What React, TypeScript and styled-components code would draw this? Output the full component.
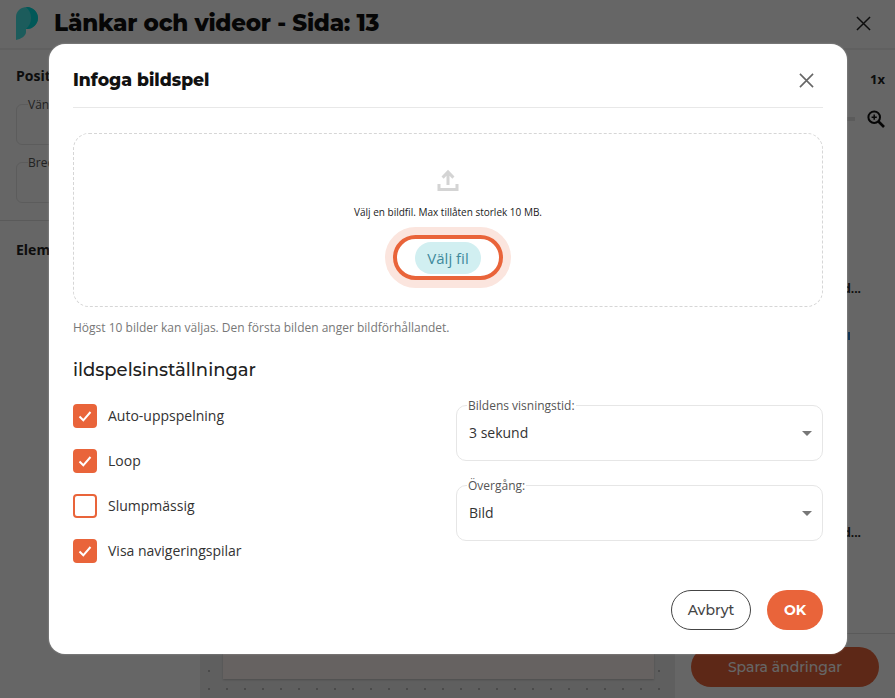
import React from "react";
import styled, { createGlobalStyle } from "styled-components";

const HEAD = `"Montserrat", "Inter", "Liberation Sans", sans-serif`;
const BODY = `"Open Sans", "Noto Sans", sans-serif`;

const Global = createGlobalStyle`
  html, body { margin: 0; padding: 0; height: 100%; background: #fff; }
  * { box-sizing: border-box; }
  #root { height: 100%; }
`;

const Screen = styled.div`
  position: relative;
  width: 895px;
  height: 698px;
  overflow: hidden;
  font-family: ${BODY};
  color: #222;
  display: flex;
  flex-direction: column;
  background: #fff;
`;

const PageHeader = styled.header`
  height: 50px;
  flex: none;
  display: flex;
  align-items: center;
  padding: 0 24px 1px 16px;
  border-bottom: 2px solid #f0f0f0;
  gap: 16px;
`;

const PageTitle = styled.h1`
  margin: 0;
  flex: 1;
  font: 800 23px/1 ${HEAD};
  letter-spacing: -0.25px;
  color: #111;
`;

const PageClose = styled.div`
  color: #222;
  display: flex;
`;

const PageBody = styled.div`
  flex: 1;
  display: flex;
  min-height: 0;
`;

const LeftPanel = styled.aside`
  width: 200px;
  flex: none;
  display: flex;
  flex-direction: column;
`;

const PanelHead = styled.div`
  font: 700 14px/20px ${BODY};
  color: #222;
`;

const PositionBlock = styled.div`
  padding: 16px 16px 0;
  height: 171px;
  border-bottom: 1px solid #e2e2e2;
`;

const GhostField = styled.div`
  margin-top: 18px;
  height: 41px;
  border: 1px solid #e6e6e6;
  border-radius: 6px;
  position: relative;
  & + & { margin-top: 17px; }
`;

const GhostLabel = styled.span`
  position: absolute;
  left: 11px;
  top: -8px;
  font-size: 12px;
  line-height: 16px;
  background: #fff;
  color: #555;
`;

const ElementBlock = styled.div`
  padding: 19px 16px 0;
`;

const Canvas = styled.main`
  width: 475px;
  flex: none;
  display: flex;
  flex-direction: column;
  justify-content: flex-end;
  background-color: #eee;
  background-image: radial-gradient(#b8b8b8 1px, transparent 1.2px);
  background-size: 18px 18px;
  padding: 0 21px 19px 23px;
`;

const Sheet = styled.div`
  height: 60px;
  background: #fff6f3;
  box-shadow: 0 1px 2px rgba(0, 0, 0, 0.2);
`;

const RightPanel = styled.aside`
  flex: 1;
  display: flex;
  flex-direction: column;
  align-items: flex-end;
  padding: 20px 10px 0 0;
`;

const Zoomed = styled.div`
  font: 700 13px/18px ${BODY};
  color: #222;
`;

const ZoomRow = styled.div`
  margin-top: 21px;
  align-self: stretch;
  display: flex;
  align-items: center;
  gap: 12px;
  height: 20px;
  color: #111;
  padding-left: 10px;
`;

const ZoomTrack = styled.div`
  flex: 1;
  height: 4px;
  background: #e4e4e4;
`;

const ClippedItem = styled.div<{ $gap: number }>`
  margin-top: ${(p) => p.$gap}px;
  margin-right: 24px;
  font: 700 12px/18px ${BODY};
  color: #222;
`;

const LinkSliver = styled.div`
  margin-top: 34px;
  margin-right: 35px;
  width: 2px;
  height: 8px;
  background: #2f7fd0;
`;

const SaveRow = styled.div`
  margin-top: auto;
  align-self: stretch;
  margin-right: -10px;
  height: 65px;
  border-top: 1px solid #e2e2e2;
  padding: 13px 16px 0 16px;
`;

const SaveButton = styled.div`
  height: 40px;
  border-radius: 20px;
  background: #e9643a;
  color: #fff;
  font: 500 14px/40px ${HEAD};
  text-align: center;
`;

const Overlay = styled.div`
  position: absolute;
  inset: 0;
  background: rgba(0, 0, 0, 0.6);
`;

const Modal = styled.section`
  position: absolute;
  left: 49px;
  top: 44px;
  width: 798px;
  height: 610px;
  border-radius: 16px;
  background: #fff;
  box-shadow: 0 0 2px rgba(255, 255, 255, 0.4);
  padding: 0 24px;
  display: flex;
  flex-direction: column;
`;

const ModalHeader = styled.header`
  height: 64px;
  flex: none;
  display: flex;
  align-items: center;
  justify-content: space-between;
  padding-top: 9px;
  border-bottom: 1px solid #e8e8e8;
`;

const ModalTitle = styled.h2`
  margin: 0;
  font: 800 17.2px/1 ${HEAD};
  color: #111;
`;

const ModalClose = styled.div`
  color: #666;
  display: flex;
  margin-right: 9px;
`;

const DropZone = styled.div`
  margin-top: 25px;
  height: 174px;
  flex: none;
  border: 1px dashed #d6d6d6;
  border-radius: 16px;
  display: flex;
  flex-direction: column;
  align-items: center;
  padding-top: 35px;
`;

const DropText = styled.p`
  margin: 14px 0 0;
  font: 400 10px/14px ${BODY};
  color: #222;
`;

const FocusRing = styled.div`
  margin-top: 8px;
  width: 126px;
  height: 61px;
  border-radius: 31px;
  background: #fbe5de;
  display: flex;
  align-items: center;
  justify-content: center;
`;

const FocusInner = styled.div`
  width: 110px;
  height: 45px;
  border-radius: 23px;
  border: 4px solid #e9643a;
  background: #fff;
  display: flex;
  align-items: center;
  justify-content: center;
`;

const PickButton = styled.div`
  width: 66px;
  height: 32px;
  border-radius: 16px;
  background: #d1eff1;
  color: #3f8a9c;
  font: 400 15px/32px ${BODY};
  text-align: center;
`;

const Hint = styled.p`
  margin: 13px 0 0;
  font: 400 12px/16px ${BODY};
  color: #777;
`;

const SectionTitle = styled.h3`
  margin: 22px 0 0;
  font: 500 18px/24px ${HEAD};
  color: #222;
`;

const SettingsGrid = styled.div`
  margin-top: 22px;
  display: flex;
`;

const CheckColumn = styled.div`
  width: 383px;
  flex: none;
  display: flex;
  flex-direction: column;
  gap: 21px;
`;

const CheckRow = styled.label`
  display: flex;
  align-items: center;
  height: 24px;
  gap: 11px;
  font: 400 14px/24px ${BODY};
  color: #333;
`;

const CheckBox = styled.span<{ $checked: boolean }>`
  width: 24px;
  height: 24px;
  border-radius: 4px;
  border: 2.5px solid #e9643a;
  background: ${(p) => (p.$checked ? "#e9643a" : "#fff")};
  display: flex;
  align-items: center;
  justify-content: center;
  color: #fff;
`;

const SelectColumn = styled.div`
  flex: 1;
  margin-top: 1px;
  display: flex;
  flex-direction: column;
  gap: 24px;
`;

const SelectBox = styled.fieldset`
  margin: 0;
  height: 56px;
  padding: 0 10px 0 12px;
  border: 1px solid #e6e6e6;
  border-radius: 10px;
  display: flex;
  align-items: flex-start;
  justify-content: space-between;
  min-width: 0;
  position: relative;
`;

const SelectLegend = styled.legend`
  position: absolute;
  left: 10px;
  top: -8px;
  padding: 0 1px;
  background: #fff;
  font: 400 12px/15px ${BODY};
  color: #555;
`;

const SelectValue = styled.span`
  margin-top: 17px;
  font: 400 14px/20px ${BODY};
  color: #333;
`;

const Caret = styled.span`
  margin-top: 25px;
  width: 0;
  height: 0;
  border-left: 5px solid transparent;
  border-right: 5px solid transparent;
  border-top: 5px solid #777;
`;

const Actions = styled.footer`
  margin-top: 27px;
  display: flex;
  justify-content: flex-end;
  gap: 16px;
`;

const CancelButton = styled.div`
  width: 80px;
  height: 40px;
  border: 1px solid #444;
  border-radius: 20px;
  font: 500 14px/38px ${HEAD};
  text-align: center;
  color: #444;
`;

const OkButton = styled.div`
  width: 56px;
  height: 40px;
  border-radius: 20px;
  background: #e9643a;
  font: 700 14px/40px ${HEAD};
  text-align: center;
  color: #fff;
`;

const Logo = () => (
  <svg width="22" height="33" viewBox="0 0 22 33">
    <path d="M0 10C0 4 5 0 11 0c6 0 11 5 11 11s-5 11-11 11c0 0-1 0-1 0v3c0 4-5 7-10 8z" fill="#48e6e6" />
    <path d="M10 0h1c6 0 11 5 11 11s-5 11-11 11h-1c3-3 5-6 5-11S13 3 10 0z" fill="#00dcdc" />
  </svg>
);

const X = ({ size, sw }: { size: number; sw: number }) => (
  <svg width={size} height={size} viewBox="0 0 16 16" fill="none" stroke="currentColor" strokeWidth={sw}>
    <path d="M1 1l14 14M15 1L1 15" />
  </svg>
);

const ZoomIcon = () => (
  <svg width="18" height="18" viewBox="0 0 18 18" fill="none" stroke="currentColor" strokeWidth="2" style={{ flex: "none" }}>
    <circle cx="7.2" cy="7.2" r="5.8" />
    <path d="M11.5 11.5L17 17" strokeWidth="2.6" />
    <path d="M7.2 4.6v5.2M4.6 7.2h5.2" strokeWidth="1.5" />
  </svg>
);

const UploadIcon = () => (
  <svg width="22" height="22" viewBox="0 0 22 22" fill="none" stroke="#d4d4d4" strokeWidth="3">
    <path d="M11 16V3.5M5.6 8.6L11 3l5.4 5.6" />
    <path d="M2 15v5.4h18V15" />
  </svg>
);

const Check = () => (
  <svg width="14" height="12" viewBox="0 0 14 12" fill="none" stroke="#fff" strokeWidth="2">
    <path d="M1.5 6.5l3.8 3.8L12.5 2" />
  </svg>
);

const checks = [
  { label: "Auto-uppspelning", on: true },
  { label: "Loop", on: true },
  { label: "Slumpmässig", on: false },
  { label: "Visa navigeringspilar", on: true },
];

const selects = [
  { label: "Bildens visningstid:", value: "3 sekund" },
  { label: "Övergång:", value: "Bild" },
];

export default function App() {
  return (
    <Screen>
      <Global />
      <PageHeader>
        <Logo />
        <PageTitle>Länkar och videor - Sida: 13</PageTitle>
        <PageClose>
          <X size={15} sw={1.6} />
        </PageClose>
      </PageHeader>
      <PageBody>
        <LeftPanel>
          <PositionBlock>
            <PanelHead>Position</PanelHead>
            <GhostField>
              <GhostLabel>Vänster</GhostLabel>
            </GhostField>
            <GhostField>
              <GhostLabel>Bredd</GhostLabel>
            </GhostField>
          </PositionBlock>
          <ElementBlock>
            <PanelHead>Element</PanelHead>
          </ElementBlock>
        </LeftPanel>
        <Canvas>
          <Sheet />
        </Canvas>
        <RightPanel>
          <Zoomed>1x</Zoomed>
          <ZoomRow>
            <ZoomTrack />
            <ZoomIcon />
          </ZoomRow>
          <ClippedItem $gap={151}>d...</ClippedItem>
          <LinkSliver />
          <ClippedItem $gap={184}>d...</ClippedItem>
          <SaveRow>
            <SaveButton>Spara ändringar</SaveButton>
          </SaveRow>
        </RightPanel>
      </PageBody>
      <Overlay />
      <Modal>
        <ModalHeader>
          <ModalTitle>Infoga bildspel</ModalTitle>
          <ModalClose>
            <X size={15} sw={1.7} />
          </ModalClose>
        </ModalHeader>
        <DropZone>
          <UploadIcon />
          <DropText>Välj en bildfil. Max tillåten storlek 10 MB.</DropText>
          <FocusRing>
            <FocusInner>
              <PickButton>Välj fil</PickButton>
            </FocusInner>
          </FocusRing>
        </DropZone>
        <Hint>Högst 10 bilder kan väljas. Den första bilden anger bildförhållandet.</Hint>
        <SectionTitle>ildspelsinställningar</SectionTitle>
        <SettingsGrid>
          <CheckColumn>
            {checks.map((c) => (
              <CheckRow key={c.label}>
                <CheckBox $checked={c.on}>{c.on && <Check />}</CheckBox>
                {c.label}
              </CheckRow>
            ))}
          </CheckColumn>
          <SelectColumn>
            {selects.map((s) => (
              <SelectBox key={s.label}>
                <SelectLegend>{s.label}</SelectLegend>
                <SelectValue>{s.value}</SelectValue>
                <Caret />
              </SelectBox>
            ))}
          </SelectColumn>
        </SettingsGrid>
        <Actions>
          <CancelButton>Avbryt</CancelButton>
          <OkButton>OK</OkButton>
        </Actions>
      </Modal>
    </Screen>
  );
}
